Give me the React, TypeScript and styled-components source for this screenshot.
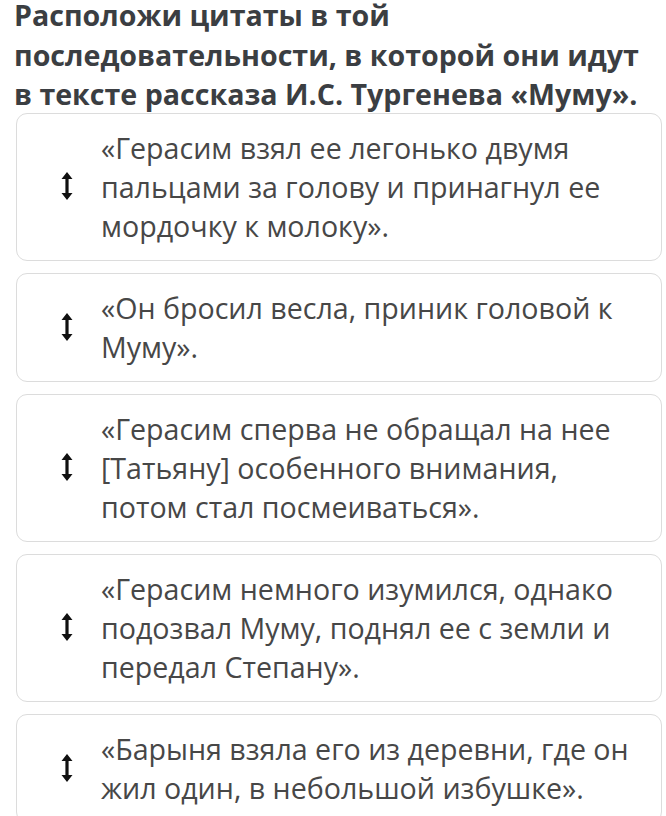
import React from 'react';
import styled, { createGlobalStyle } from 'styled-components';

const GlobalStyle = createGlobalStyle`
  html, body {
    margin: 0;
    padding: 0;
    background: #ffffff;
  }
  body {
    font-family: "Open Sans", "Noto Sans", sans-serif;
    overflow: hidden;
  }
`;

const Page = styled.div`
  width: 666px;
  height: 816px;
  overflow: hidden;
  box-sizing: border-box;
  padding: 0 4px 0 16px;
`;

const Title = styled.h1`
  margin: -5px 0 -1px -2px;
  font-size: 28.6px;
  line-height: 39.5px;
  font-weight: 700;
  color: #3b3e42;
`;

const List = styled.div`
  display: flex;
  flex-direction: column;
  gap: 12px;
`;

const Card = styled.div`
  display: flex;
  align-items: center;
  border: 1.5px solid #dcdcdc;
  border-radius: 11px;
  padding: 14px 18px 15px 0;
  background: #fff;
`;

const Handle = styled.div`
  width: 84px;
  flex-shrink: 0;
  display: flex;
  justify-content: center;
  padding-left: 15px;
  box-sizing: border-box;
  svg {
    display: block;
  }
`;

const Quote = styled.p`
  margin: 0;
  font-size: 28.6px;
  line-height: 39px;
  color: #474747;
`;

const quotes = [
  '«Герасим взял ее легонько двумя пальцами за голову и принагнул ее мордочку к молоку».',
  '«Он бросил весла, приник головой к Муму».',
  '«Герасим сперва не обращал на нее [Татьяну] особенного внимания, потом стал посмеиваться».',
  '«Герасим немного изумился, однако подозвал Муму, поднял ее с земли и передал Степану».',
  '«Барыня взяла его из деревни, где он жил один, в небольшой избушке».',
];

const DragIcon = () => (
  <svg width="12" height="28" viewBox="0 0 12 28">
    <path d="M6 0 L11.5 7 L7.6 7 L7.6 21 L11.5 21 L6 28 L0.5 21 L4.4 21 L4.4 7 L0.5 7 Z" fill="#111" />
  </svg>
);

export default function App() {
  return (
    <>
      <GlobalStyle />
      <Page>
        <Title>Расположи цитаты в той последовательности, в которой они идут в тексте рассказа И.С. Тургенева «Муму».</Title>
        <List>
          {quotes.map((q, i) => (
            <Card key={i}>
              <Handle>
                <DragIcon />
              </Handle>
              <Quote>{q}</Quote>
            </Card>
          ))}
        </List>
      </Page>
    </>
  );
}
